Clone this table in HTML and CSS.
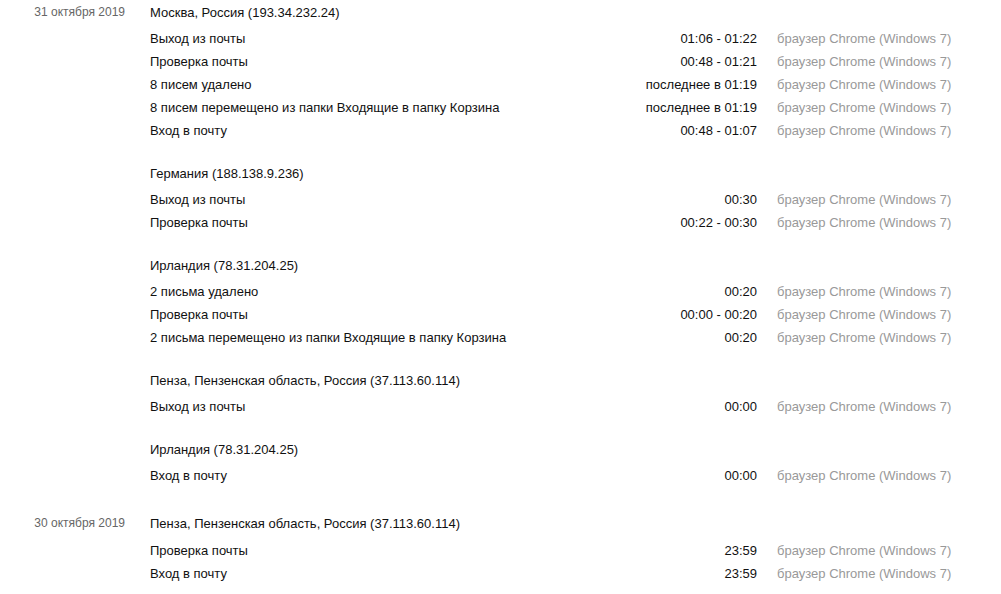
FILE: index.html
```html
<!DOCTYPE html>
<html lang="ru">
<head>
<meta charset="utf-8">
<link rel="stylesheet" href="styles.css">
</head>
<body>
<div class="log">
  <section class="day">
    <div class="date">31 октября 2019</div>
    <div class="groups">
      <div class="group">
        <div class="place">Москва, Россия (193.34.232.24)</div>
        <div class="row"><span class="act">Выход из почты</span><span class="time">01:06 - 01:22</span><span class="br">браузер Chrome (Windows 7)</span></div>
        <div class="row"><span class="act">Проверка почты</span><span class="time">00:48 - 01:21</span><span class="br">браузер Chrome (Windows 7)</span></div>
        <div class="row"><span class="act">8 писем удалено</span><span class="time">последнее в 01:19</span><span class="br">браузер Chrome (Windows 7)</span></div>
        <div class="row"><span class="act">8 писем перемещено из папки Входящие в папку Корзина</span><span class="time">последнее в 01:19</span><span class="br">браузер Chrome (Windows 7)</span></div>
        <div class="row"><span class="act">Вход в почту</span><span class="time">00:48 - 01:07</span><span class="br">браузер Chrome (Windows 7)</span></div>
      </div>
      <div class="group">
        <div class="place">Германия (188.138.9.236)</div>
        <div class="row"><span class="act">Выход из почты</span><span class="time">00:30</span><span class="br">браузер Chrome (Windows 7)</span></div>
        <div class="row"><span class="act">Проверка почты</span><span class="time">00:22 - 00:30</span><span class="br">браузер Chrome (Windows 7)</span></div>
      </div>
      <div class="group">
        <div class="place">Ирландия (78.31.204.25)</div>
        <div class="row"><span class="act">2 письма удалено</span><span class="time">00:20</span><span class="br">браузер Chrome (Windows 7)</span></div>
        <div class="row"><span class="act">Проверка почты</span><span class="time">00:00 - 00:20</span><span class="br">браузер Chrome (Windows 7)</span></div>
        <div class="row"><span class="act">2 письма перемещено из папки Входящие в папку Корзина</span><span class="time">00:20</span><span class="br">браузер Chrome (Windows 7)</span></div>
      </div>
      <div class="group">
        <div class="place">Пенза, Пензенская область, Россия (37.113.60.114)</div>
        <div class="row"><span class="act">Выход из почты</span><span class="time">00:00</span><span class="br">браузер Chrome (Windows 7)</span></div>
      </div>
      <div class="group">
        <div class="place">Ирландия (78.31.204.25)</div>
        <div class="row"><span class="act">Вход в почту</span><span class="time">00:00</span><span class="br">браузер Chrome (Windows 7)</span></div>
      </div>
    </div>
  </section>
  <section class="day">
    <div class="date">30 октября 2019</div>
    <div class="groups">
      <div class="group">
        <div class="place">Пенза, Пензенская область, Россия (37.113.60.114)</div>
        <div class="row"><span class="act">Проверка почты</span><span class="time">23:59</span><span class="br">браузер Chrome (Windows 7)</span></div>
        <div class="row"><span class="act">Вход в почту</span><span class="time">23:59</span><span class="br">браузер Chrome (Windows 7)</span></div>
      </div>
    </div>
  </section>
</div>
</body>
</html>
```

FILE: styles.css
```css
html, body {
  margin: 0;
  padding: 0;
  background: #fff;
}
body {
  font-family: "Liberation Sans", Arial, sans-serif;
  font-size: 13px;
  color: #111;
}
.log {
  padding-top: 1px;
}
.day {
  display: flex;
  margin-bottom: 25px;
}
.date {
  width: 125px;
  flex: none;
  text-align: right;
  color: #666;
  font-size: 12px;
  line-height: 23px;
  margin-right: 25px;
}
.groups {
  width: 807px;
  flex: none;
}
.group {
  margin-bottom: 20px;
}
.group:last-child {
  margin-bottom: 0;
}
.place {
  line-height: 23px;
  margin-bottom: 3px;
}
.day + .day .place {
  margin-bottom: 4px;
}
.row {
  display: flex;
  line-height: 23px;
  height: 23px;
}
.act {
  flex: 1;
  white-space: nowrap;
}
.time {
  text-align: right;
  padding-right: 20px;
  white-space: nowrap;
}
.br {
  width: 180px;
  flex: none;
  color: #999;
  white-space: nowrap;
}
```
